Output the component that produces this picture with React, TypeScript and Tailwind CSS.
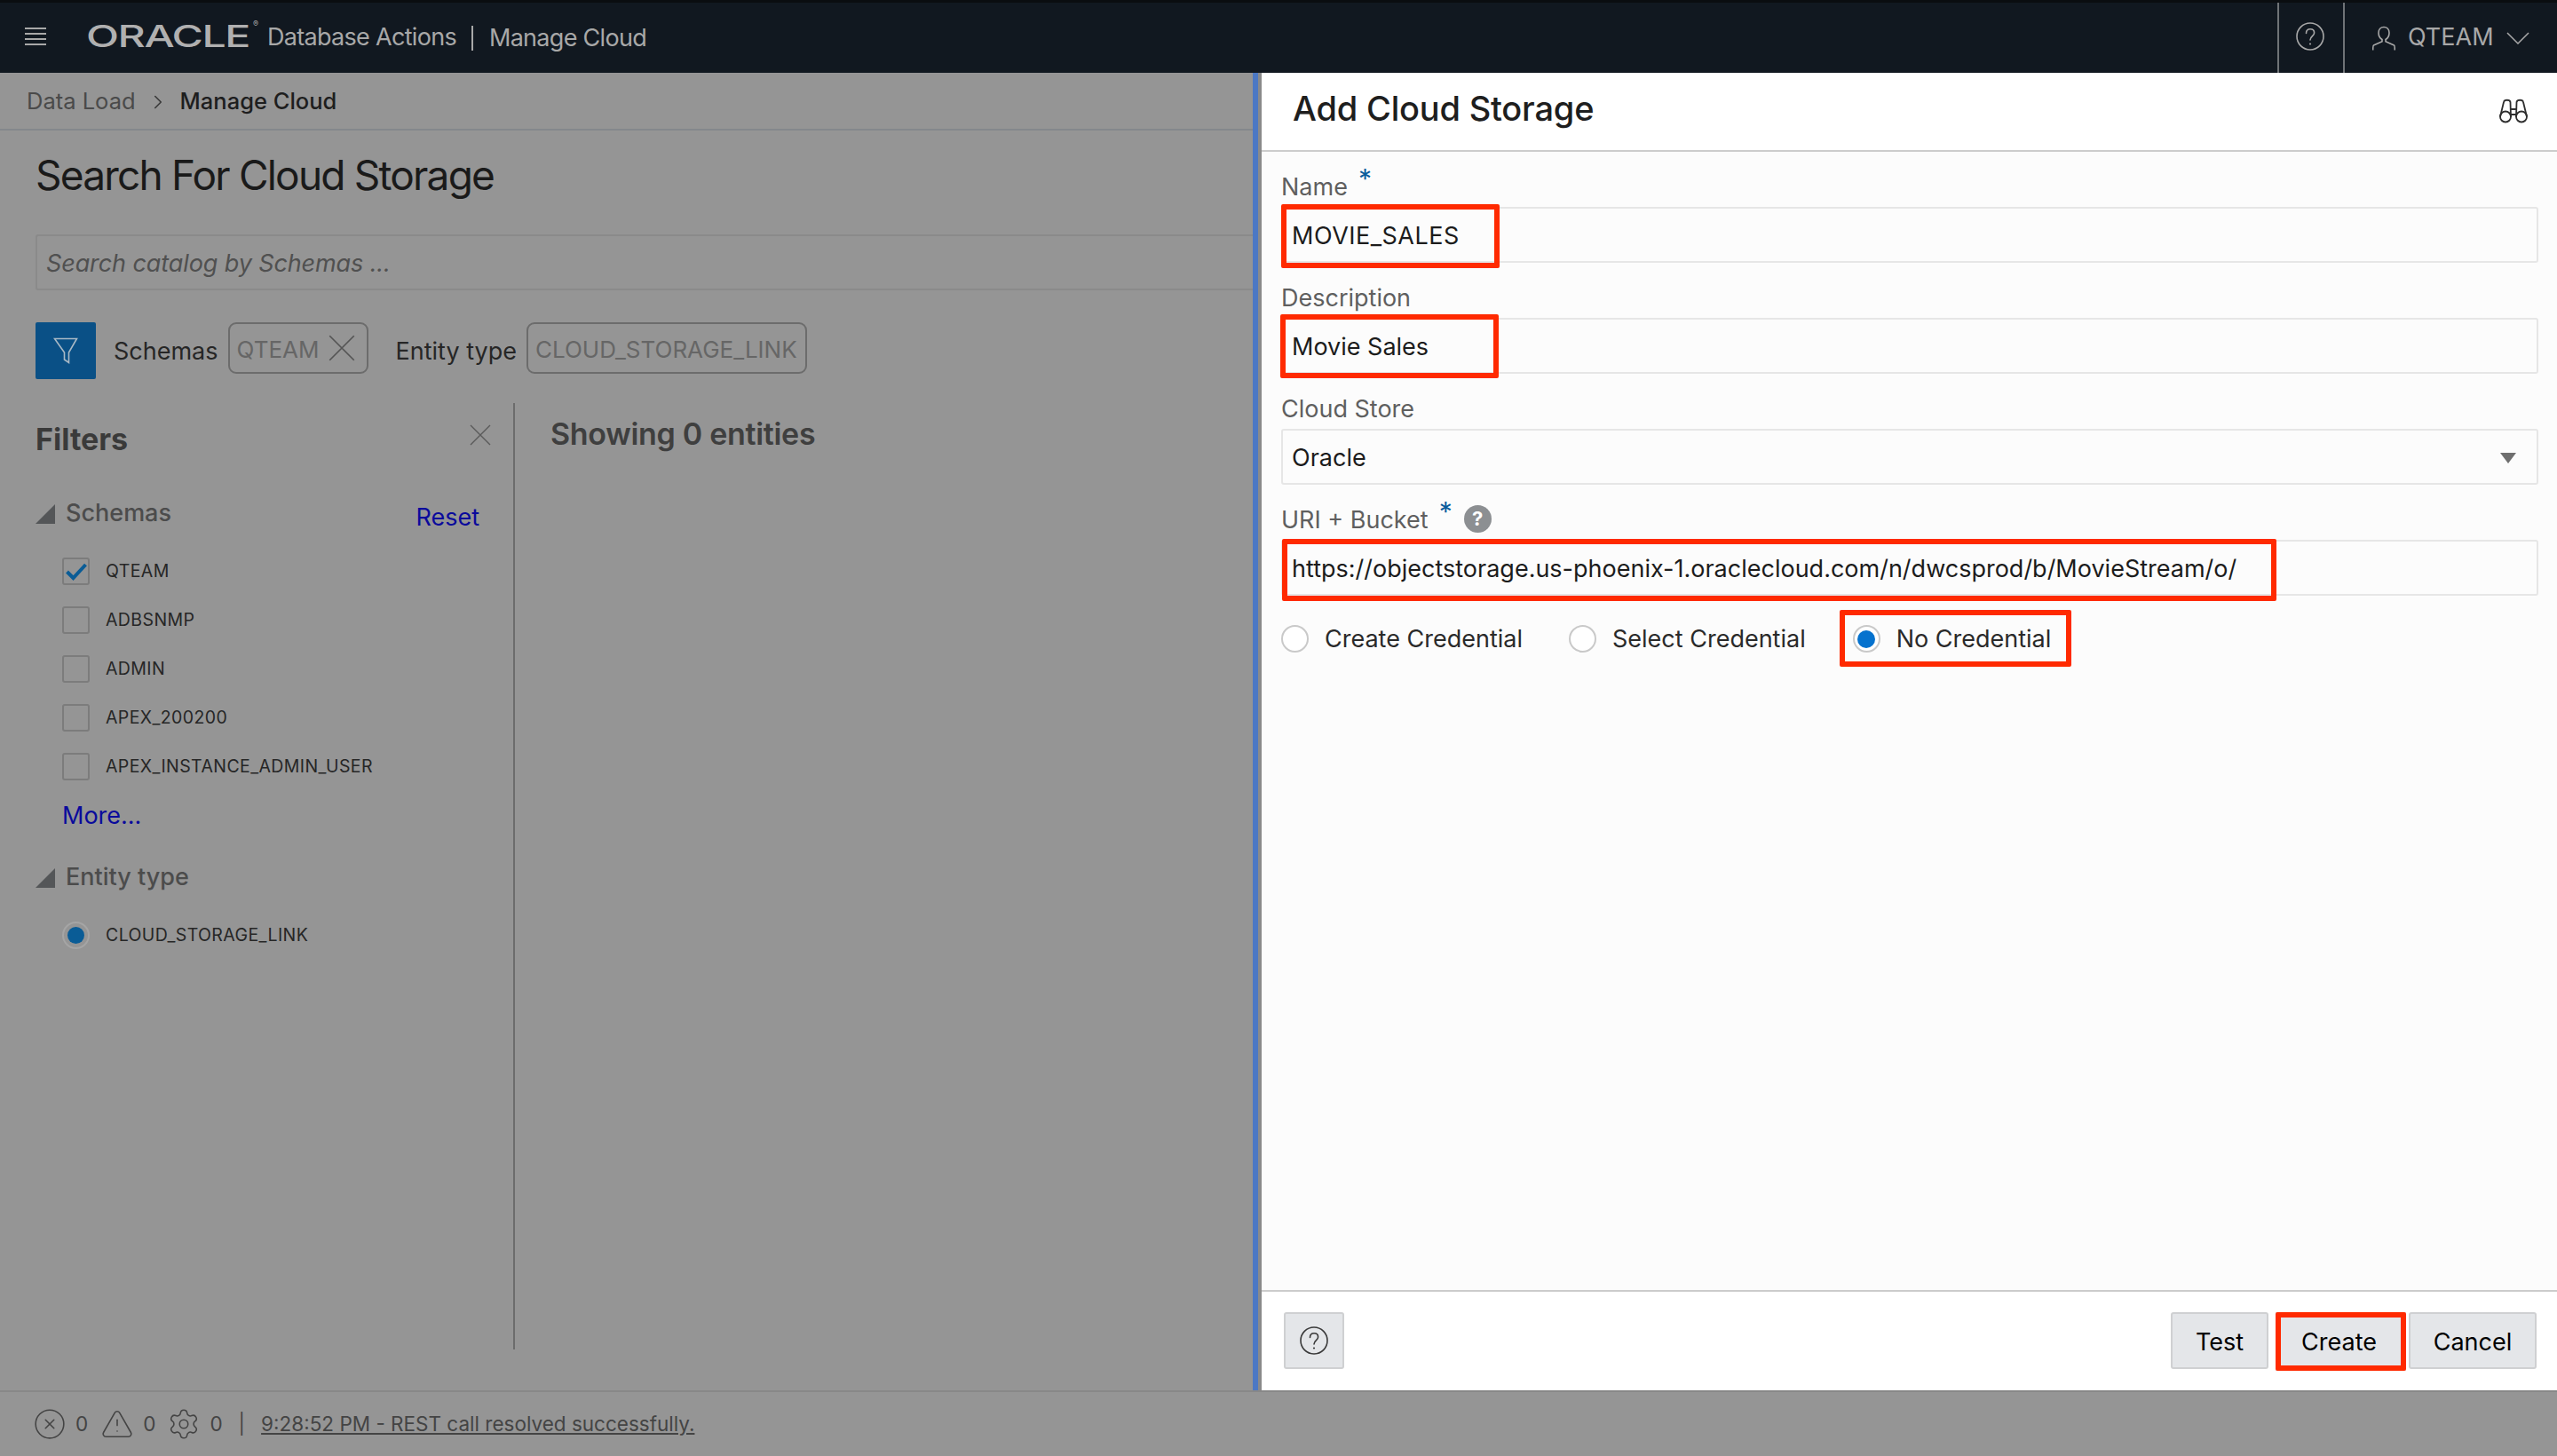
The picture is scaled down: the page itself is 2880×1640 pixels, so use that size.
import { ChevronRight, CircleX, Settings, TriangleAlert } from "lucide-react";
import type { ReactNode } from "react";

const schemas = ["QTEAM", "ADBSNMP", "ADMIN", "APEX_200200", "APEX_INSTANCE_ADMIN_USER"];

function HelpCircle({ className }: { className: string }) {
  return (
    <svg viewBox="0 0 32 32" fill="none" stroke="currentColor" className={className}>
      <circle cx="16" cy="16" r="15" strokeWidth="1.6" />
      <path d="M11.5 12.5c0-3 2-4.7 4.6-4.7s4.5 1.7 4.5 4.2c0 3.6-4.6 3.6-4.6 8" strokeWidth="1.6" strokeLinecap="round" />
      <circle cx="16" cy="24.5" r="1.1" fill="currentColor" stroke="none" />
    </svg>
  );
}

function Cross({ className }: { className: string }) {
  return (
    <svg viewBox="0 0 24 24" fill="none" stroke="currentColor" strokeWidth="1.4" className={className}>
      <path d="M1 1l22 22M23 1L1 23" />
    </svg>
  );
}

function Caret() {
  return (
    <svg viewBox="0 0 22 22" className="w-[22px] h-[22px] text-[#545658] mt-[2px]">
      <polygon points="22,0 22,22 0,22" fill="currentColor" />
    </svg>
  );
}

function Field({ label, required, help, children }: { label: string; required?: boolean; help?: boolean; children: ReactNode }) {
  return (
    <div>
      <div className="h-[62px] flex items-end pb-[7px] text-[27px] leading-[30px] text-[#5f5f5f]">
        <span>{label}</span>
        {required && <span className="text-[#0a5c9c] text-[30px] leading-[30px] ml-[12px] mb-[10px]">*</span>}
        {help && <span className="ml-[13px] mb-[1px] w-[31px] h-[31px] rounded-full bg-[#8c8f92] text-white text-[22px] leading-[31px] font-bold text-center">?</span>}
      </div>
      <div className="relative h-[63px] border-2 border-[#e6e6e6] rounded-[3px] bg-[#fcfcfc] pl-[10px] pt-[4px] flex items-center text-[27px] text-[#1c1c1c]">
        {children}
      </div>
    </div>
  );
}

function RedBox({ className }: { className: string }) {
  return <div className={`absolute border-[6px] border-[#ff2a00] rounded-[2px] pointer-events-none ${className}`} />;
}

function Radio({ on }: { on?: boolean }) {
  return (
    <span className="w-[31px] h-[31px] rounded-full border-2 border-[#c9c9c9] bg-white flex items-center justify-center shrink-0">
      {on && <span className="w-[20px] h-[20px] rounded-full bg-[#0572ce]" />}
    </span>
  );
}

export default function App() {
  return (
    <div className="w-[2880px] h-[1640px] flex flex-col overflow-hidden bg-[#959595] [font-family:Inter,sans-serif]">
      {/* Top bar */}
      <header className="h-[82px] shrink-0 bg-[#111820] border-t-[3px] border-[#0a0d10] flex items-center text-[#a8a8a8]">
        <svg viewBox="0 0 24 22" className="w-[24px] h-[22px] ml-[28px] -mt-[3px]" stroke="currentColor" strokeWidth="2.2">
          <path d="M0 2h24M0 8h24M0 14h24M0 20h24" />
        </svg>
        <div className="ml-[45px] w-[190px] h-[40px] relative -mt-[3px]">
          <span className="block origin-left scale-x-[1.42] text-[34px] leading-[40px] font-medium tracking-[-1px] text-[#b0b0b0]">ORACLE</span>
          <span className="absolute -right-[4px] top-0 text-[9px] leading-[12px]">®</span>
        </div>
        <span className="ml-[14px] text-[27px] tracking-[-0.7px]">Database Actions</span>
        <span className="ml-[17px] w-[2px] h-[28px] bg-[#a8a8a8]" />
        <span className="ml-[18px] text-[27px] tracking-[-0.7px] mt-[1px]">Manage Cloud</span>

        <div className="ml-auto self-stretch w-[74px] border-l-2 border-[#6f7377] flex items-center justify-center">
          <HelpCircle className="w-[32px] h-[32px] -mt-[3px] -ml-[2px]" />
        </div>
        <div className="self-stretch w-[241px] border-l-2 border-[#6f7377] flex items-center pl-[31px]">
          <svg viewBox="0 0 26 28" fill="none" stroke="currentColor" strokeWidth="1.6" className="w-[26px] h-[28px]">
            <path d="M13 1.5c-3.6 0-6 2.6-6 6.4 0 3.4 2 6.3 4 7.6v2.3L1.5 22c-.7.4-.8 2-.8 5.5M13 1.5c3.6 0 6 2.6 6 6.4 0 3.4-2 6.3-4 7.6v2.3l9.5 4.2c.7.4.8 2 .8 5.5" />
          </svg>
          <span className="ml-[14px] text-[27px]">QTEAM</span>
          <svg viewBox="0 0 26 14" fill="none" stroke="currentColor" strokeWidth="1.5" className="ml-[14px] w-[26px] h-[14px]">
            <path d="M1 1l12 12L25 1" />
          </svg>
        </div>
      </header>

      <div className="flex flex-1 min-h-0">
        {/* Dimmed page */}
        <main className="w-[1411px] shrink-0 overflow-hidden">
          <div className="h-[65px] border-b-2 border-[#84888c] pl-[30px] pt-[2px] flex items-center text-[25.500px]">
            <span className="text-[#4a4a4a]">Data Load</span>
            <ChevronRight className="mx-[12px] w-[26px] h-[26px] text-[#3a3a3a]" strokeWidth={1.5} />
            <span className="text-[#1e1e1e] font-medium">Manage Cloud</span>
          </div>

          <div className="pl-10">
            <h1 className="h-[117px] pt-[25px] text-[46px] leading-[50px] tracking-[-1.8px] text-[#1a1a1a]">Search For Cloud Storage</h1>
            <div className="h-[63px] border-2 border-r-0 border-[#8a8a8a] rounded-l-[3px] pl-[10px] pt-[4px] flex items-center text-[27px] tracking-[-0.1px] italic text-[#505050]">
              Search catalog by Schemas ...
            </div>

            <div className="mt-[36px] h-[64px] flex text-[27px] text-[#262626]">
              <button className="w-[68px] h-[64px] bg-[#0a5086] rounded-[2px] flex items-center justify-center text-[#a9b9c6]">
                <svg viewBox="0 0 28 30" fill="none" stroke="currentColor" strokeWidth="1.6" className="w-[28px] h-[30px]">
                  <path d="M1.5 1.500h25L17.500 17v11.500l-5-3.500v-8z" />
                </svg>
              </button>
              <span className="ml-5 self-center mt-[2px]">Schemas</span>
              <span className="ml-[11px] w-[158px] h-[58px] border-2 border-[#6c6c6c] rounded-[9px] pl-[8px] pt-[2px] flex items-center text-[26px] text-[#666666]">
                QTEAM
                <Cross className="ml-[11px] -mt-[2px] w-[30px] h-[30px] text-[#555555]" />
              </span>
              <span className="ml-[31px] self-center mt-[2px]">Entity type</span>
              <span className="ml-[11px] w-[316px] h-[58px] border-2 border-[#6c6c6c] rounded-[9px] pl-[8px] pt-[2px] flex items-center text-[26px] text-[#666666]">
                CLOUD_STORAGE_LINK
              </span>
            </div>

            <div className="mt-[27px] h-[1066px] flex">
              <aside className="w-[540px] border-r-2 border-[#6c6c6c]">
                <div className="h-[104px] flex justify-between pt-[21px] pr-[25px]">
                  <h2 className="text-[34px] leading-[40px] font-bold text-[#3a3a3a]">Filters</h2>
                  <Cross className="w-[24px] h-[24px] mt-[3px] text-[#5a5a5a]" />
                </div>

                <div className="h-[40px] flex items-center pr-[38px] text-[27px] font-medium text-[#4c4c4c]">
                  <Caret />
                  <span className="ml-[12px] mt-[1px]">Schemas</span>
                  <a className="ml-auto mt-[10px] text-[#0a0a9c] font-normal">Reset</a>
                </div>
                <ul className="mt-[18px] pl-[30px]">
                  {schemas.map((s, i) => (
                    <li key={s} className="h-[55px] flex items-center">
                      <span className="w-[31px] h-[31px] border-2 border-[#7c7c7c] rounded-[3px] flex items-center justify-center">
                        {i === 0 && (
                          <svg viewBox="0 0 24 20" fill="none" stroke="#0a5c96" strokeWidth="4" className="w-[24px] h-[20px]">
                            <path d="M1.500 10l7 7L22.500 2" />
                          </svg>
                        )}
                      </span>
                      <span className="ml-[18px] text-[19.500px] tracking-[0.4px] text-[#262626]">{s}</span>
                    </li>
                  ))}
                  <li className="h-[55px] pt-[2px] flex items-center text-[27px] text-[#0a0a9c]">More...</li>
                </ul>

                <div className="mt-[22px] h-[40px] flex items-center text-[27px] font-medium text-[#4c4c4c]">
                  <Caret />
                  <span className="ml-[12px] mt-[1px]">Entity type</span>
                </div>
                <div className="mt-[18px] h-[55px] pl-[30px] flex items-center">
                  <span className="w-[31px] h-[31px] rounded-full border-2 border-[#a5a5a5] flex items-center justify-center">
                    <span className="w-[19px] h-[19px] rounded-full bg-[#0a5c96]" />
                  </span>
                  <span className="ml-[18px] text-[19.500px] tracking-[0.4px] text-[#262626]">CLOUD_STORAGE_LINK</span>
                </div>
              </aside>
              <div className="pl-[40px] pt-[15px] text-[34px] leading-[40px] font-semibold tracking-[-0.3px] text-[#3f3f3f]">Showing 0 entities</div>
            </div>
          </div>
        </main>

        <div className="w-[6px] shrink-0 bg-[#4c78c4]" />
        <div className="w-[4px] shrink-0 bg-[#8a8a8a]" />

        {/* Add Cloud Storage drawer */}
        <section className="flex-1 flex flex-col bg-[#fcfcfc]">
          <div className="h-[89px] shrink-0 bg-white border-b-2 border-[#cccccc] flex items-center justify-between pl-[35px] pr-[33px]">
            <h2 className="text-[38px] font-medium tracking-[-0.2px] text-[#1e1e1e] -mt-[6px]">Add Cloud Storage</h2>
            <svg viewBox="0 0 32 28" fill="none" stroke="#2e2e2e" strokeWidth="1.8" className="w-[32px] h-[28px] -mt-[2px]">
              <circle cx="7" cy="20.500" r="6" />
              <circle cx="25" cy="20.500" r="6" />
              <path d="M1 20.500L5 4c.5-3 7-3 7.500 0l.5 17M31 20.500L27 4c-.5-3-7-3-7.500 0L19 21M13 12h6M13 18h6" />
            </svg>
          </div>

          <div className="flex-1 pl-[22px] pr-[21px]">
            <Field label="Name" required>
              <span className="tracking-[0.5px]">MOVIE_SALES</span>
              <RedBox className="-left-[2px] -top-[5px] w-[246px] h-[72px]" />
            </Field>
            <Field label="Description">
              Movie Sales
              <RedBox className="-left-[3px] -top-[6px] w-[246px] h-[72px]" />
            </Field>
            <Field label="Cloud Store">
              Oracle
              <svg viewBox="0 0 18 12" className="absolute right-[23px] top-[25px] w-[18px] h-[12px]">
                <polygon points="0,0 18,0 9,12" fill="#6e6e6e" />
              </svg>
            </Field>
            <Field label="URI + Bucket" required help>
              https://objectstorage.us-phoenix-1.oraclecloud.com/n/dwcsprod/b/MovieStream/o/
              <RedBox className="-left-[1px] -top-[3px] w-[1120px] h-[70px]" />
            </Field>

            <div className="mt-[33px] flex items-center h-[31px] text-[27px] text-[#2a2a2a]">
              <Radio />
              <span className="ml-[18px] mt-[1px]">Create Credential</span>
              <span className="ml-[52px]"><Radio /></span>
              <span className="ml-[18px] mt-[1px]">Select Credential</span>
              <span className="relative ml-[53px] flex items-center">
                <Radio on />
                <span className="ml-[18px] mt-[1px]">No Credential</span>
                <RedBox className="-left-[15px] -top-[12px] w-[261px] h-[64px]" />
              </span>
            </div>
          </div>

          <div className="h-[113px] shrink-0 bg-white border-t-2 border-[#cccccc] pl-[25px] pr-[23px] flex items-start pt-[23px]">
            <button className="w-[68px] h-[64px] bg-[#e4e6e9] border-2 border-[#cfd0d2] rounded-[3px] flex items-center justify-center text-[#3a3a3a]">
              <HelpCircle className="w-[32px] h-[32px]" />
            </button>
            <button className="ml-auto w-[110px] h-[64px] pt-[4px] bg-[#e4e6e9] border-2 border-[#cfd0d2] rounded-[3px] text-[27px] text-black">Test</button>
            <button className="relative ml-[8px] w-[147px] h-[66px] pr-[4px] pt-[2px] bg-[#e4e6e9] text-[27px] text-black">
              Create
              <RedBox className="inset-0" />
            </button>
            <button className="ml-[3px] w-[144px] h-[64px] pt-[4px] bg-[#e4e6e9] border-2 border-[#cfd0d2] rounded-[3px] text-[27px] text-black">Cancel</button>
          </div>
        </section>
      </div>

      {/* Status bar */}
      <footer className="h-[74px] shrink-0 border-t-2 border-[#888888] pl-[37px] flex items-center text-[22.500px] text-[#444444]">
        <CircleX className="w-[38px] h-[38px]" strokeWidth={1} />
        <span className="ml-[10px]">0</span>
        <TriangleAlert className="ml-[14px] w-[38px] h-[38px]" strokeWidth={1} />
        <span className="ml-[10px]">0</span>
        <Settings className="ml-[13px] w-[38px] h-[38px]" strokeWidth={1} />
        <span className="ml-[10px]">0</span>
        <span className="ml-[18px]">|</span>
        <span className="ml-[18px] underline">9:28:52 PM - REST call resolved successfully.</span>
      </footer>
    </div>
  );
}
